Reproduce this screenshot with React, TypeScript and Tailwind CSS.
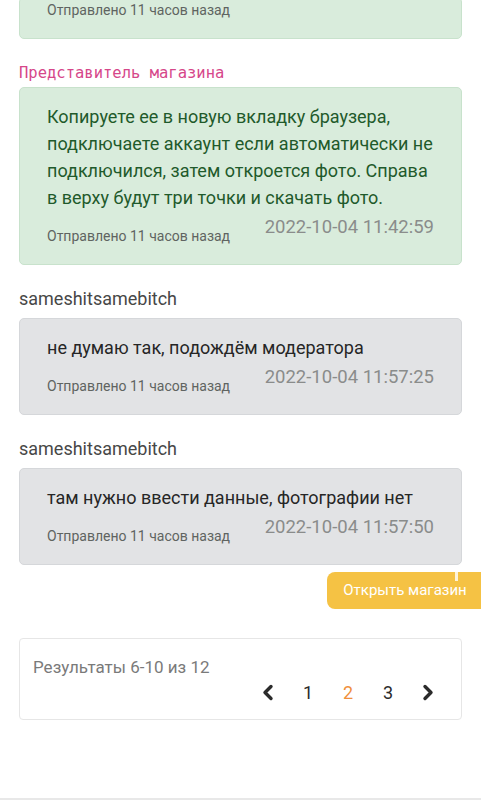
import React from 'react';

type Message = {
  author: string;
  staff?: boolean;
  text: string;
  date: string;
  ago: string;
};

const messages: Message[] = [
  {
    author: 'Представитель магазина',
    staff: true,
    text: 'Копируете ее в новую вкладку браузера, подключаете аккаунт если автоматически не подключился, затем откроется фото. Справа в верху будут три точки и скачать фото.',
    date: '2022-10-04 11:42:59',
    ago: 'Отправлено 11 часов назад',
  },
  {
    author: 'sameshitsamebitch',
    text: 'не думаю так, подождём модератора',
    date: '2022-10-04 11:57:25',
    ago: 'Отправлено 11 часов назад',
  },
  {
    author: 'sameshitsamebitch',
    text: 'там нужно ввести данные, фотографии нет',
    date: '2022-10-04 11:57:50',
    ago: 'Отправлено 11 часов назад',
  },
];

const MessageCard: React.FC<{ m: Message }> = ({ m }) => {
  const box = m.staff
    ? 'bg-[#d9ecdc] border-[#c8e2cc] text-[#1f5a2b]'
    : 'bg-[#e2e3e5] border-[#d5d7da] text-[#262626]';
  return (
    <div className={`border rounded-[5px] pl-[27px] pr-[27px] pt-[15px] pb-[19px] ${box}`}>
      <p className="text-[18px] leading-[27px]">{m.text}</p>
      <div className="flex justify-between items-end mt-[4px]">
        <span className="text-[14px] leading-[18px] text-[#5f6461]">{m.ago}</span>
        <span className="text-[18.5px] leading-[24px] text-[#8a8c8b] mb-[6px]">{m.date}</span>
      </div>
    </div>
  );
};

const Chevron: React.FC<{ dir: 'left' | 'right' }> = ({ dir }) => (
  <svg width="12" height="17" viewBox="0 0 12 17" className="text-[#2b2b2b]">
    <path
      d={dir === 'left' ? 'M9 2.5 L3 8.5 L9 14.5' : 'M3 2.5 L9 8.5 L3 14.5'}
      fill="none"
      stroke="currentColor"
      strokeWidth="3.4"
      strokeLinecap="round"
      strokeLinejoin="round"
    />
  </svg>
);

export default function App() {
  return (
    <div className="min-h-[800px] bg-white font-['Roboto','Noto_Sans',sans-serif] overflow-hidden">
      <div className="px-[19px]">
        {/* previous message, scrolled mostly out of view */}
        <div className="h-[39px] overflow-hidden flex flex-col justify-end">
          <div className="border border-[#c8e2cc] bg-[#d9ecdc] rounded-[5px] pl-[27px] pr-[27px] pb-[16px]">
            <span className="text-[14px] leading-[18px] text-[#5f6461]">Отправлено 11 часов назад</span>
          </div>
        </div>

        {messages.map((m, i) => (
          <div key={i}>
            {m.staff ? (
              <div className="mt-[23px] mb-[3px] text-[15.5px] leading-[22px] text-[#d6478a] font-['DejaVu_Sans_Mono',monospace]">
                {m.author}
              </div>
            ) : (
              <div className="mt-[23px] mb-[8px] text-[18px] leading-[22px] text-[#474747]">{m.author}</div>
            )}
            <MessageCard m={m} />
          </div>
        ))}
      </div>

      <div className="flex justify-end mt-[7px]">
        <button className="relative w-[154px] h-[37px] rounded-l-[8px] bg-[#f5c244] text-white text-[15px] pl-[2px]">
          Открыть магазин
          <span className="absolute right-[23px] top-0 w-[3px] h-[9px] bg-white/80" />
        </button>
      </div>

      <div className="px-[19px] mt-[29px]">
        <div className="border border-[#e6e6e6] rounded-[4px] pl-[13px] pr-[13px] pt-[17px] pb-[14px]">
          <div className="text-[17px] leading-[22px] text-[#7a7a7a]">Результаты 6-10 из 12</div>
          <div className="flex justify-end items-center h-[26px] mt-[1px] text-[18px] text-[#2b2b2b]">
            <span className="w-[40px] flex justify-center"><Chevron dir="left" /></span>
            <span className="w-[40px] text-center">1</span>
            <span className="w-[40px] text-center text-[#f0903c]">2</span>
            <span className="w-[40px] text-center">3</span>
            <span className="w-[40px] flex justify-center"><Chevron dir="right" /></span>
          </div>
        </div>
      </div>

      <div className="mt-[78px] border-t-[3px] border-[#e8e8e8] h-[40px]" />
    </div>
  );
}
